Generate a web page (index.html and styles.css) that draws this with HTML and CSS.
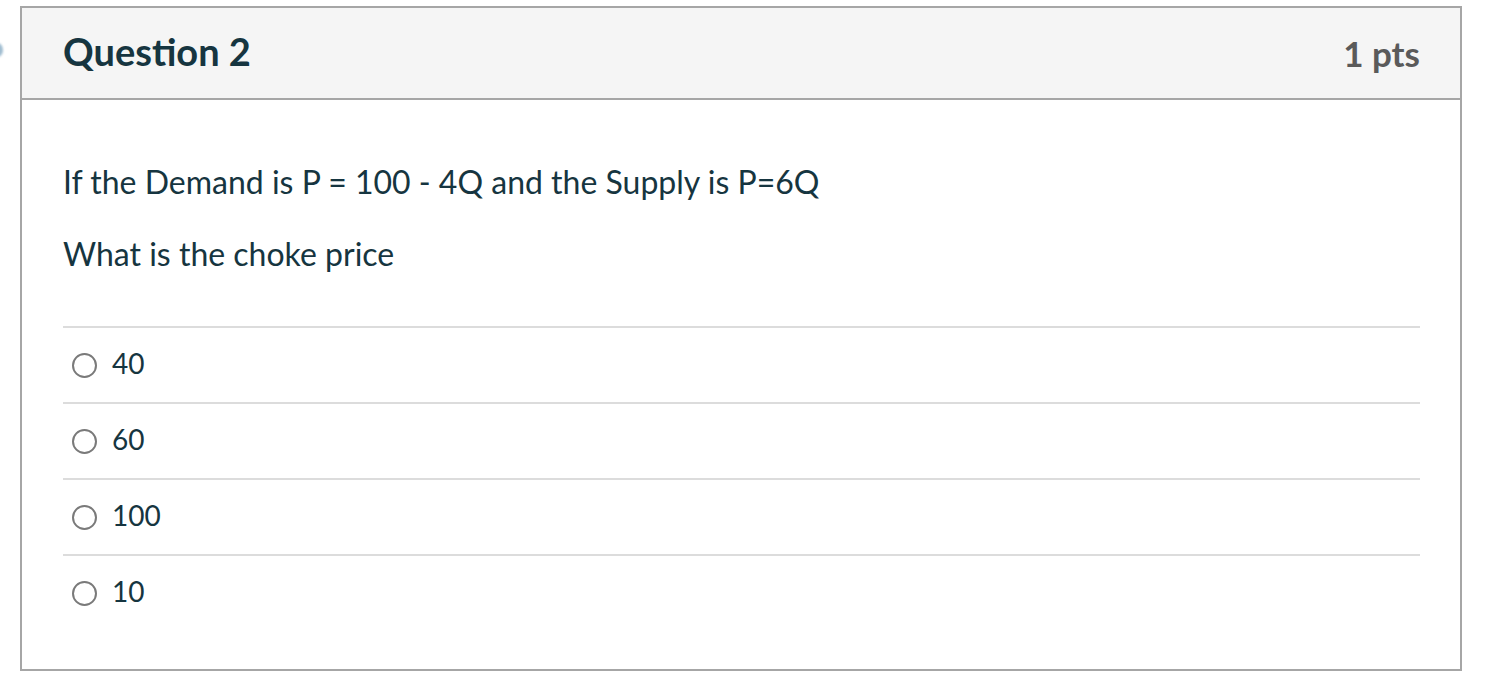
FILE: index.html
```html
<!DOCTYPE html>
<html>
<head>
<meta charset="utf-8">
<link rel="stylesheet" href="styles.css">
</head>
<body>
<span class="edge-dot"></span>
<div class="question">
  <div class="q-header">
    <h2 class="q-title">Question 2</h2>
    <span class="q-pts">1 pts</span>
  </div>
  <div class="q-body">
    <p class="q-text">If the Demand is P = 100 - 4Q and the Supply is P=6Q</p>
    <p class="q-text">What is the choke price</p>
    <div class="answers">
      <label class="answer"><span class="radio"></span><span class="answer-text">40</span></label>
      <label class="answer"><span class="radio"></span><span class="answer-text">60</span></label>
      <label class="answer"><span class="radio"></span><span class="answer-text">100</span></label>
      <label class="answer"><span class="radio"></span><span class="answer-text">10</span></label>
    </div>
  </div>
</div>
</body>
</html>
```
FILE: styles.css
```css
html, body {
  margin: 0;
  padding: 0;
  background: #ffffff;
}
body {
  font-family: Lato, "Noto Sans", sans-serif;
  color: #163540;
  position: relative;
  padding-top: 6px;
  padding-left: 20px;
}
.edge-dot {
  position: absolute;
  left: -8px;
  top: 43px;
  width: 11px;
  height: 14px;
  border-radius: 50%;
  background: #9fbcd0;
  filter: blur(1px);
}
.question {
  width: 1442px;
  height: 665px;
  box-sizing: border-box;
  border: 2px solid #a6a6a6;
  display: flex;
  flex-direction: column;
}
.q-header {
  height: 92px;
  box-sizing: border-box;
  background: #f5f5f5;
  border-bottom: 2px solid #a6a6a6;
  display: flex;
  align-items: center;
  justify-content: space-between;
  padding: 0 40px 0 41px;
}
.q-title {
  margin: 0;
  font-size: 38px;
  font-weight: 700;
  line-height: 44px;
  color: #163540;
  position: relative;
  top: -2px;
}
.q-pts {
  font-size: 35px;
  font-weight: 700;
  color: #5a5a5a;
  line-height: 44px;
  position: relative;
  top: 0;
}
.q-body {
  padding: 61px 40px 0 41px;
}
.q-text {
  margin: 0 0 30px;
  font-size: 32px;
  line-height: 42px;
}
.answers {
  margin-top: 51px;
}
.answer {
  display: flex;
  align-items: center;
  height: 76px;
  box-sizing: border-box;
  border-top: 2px solid #dcdcdc;
  padding-left: 9px;
}
.radio {
  width: 25px;
  height: 25px;
  box-sizing: border-box;
  border: 2px solid #7a7a7a;
  border-radius: 50%;
  background: #fff;
  flex: none;
}
.answer-text {
  margin-left: 15px;
  font-size: 28px;
  line-height: 34px;
  color: #163540;
  position: relative;
  top: -2px;
}
```
